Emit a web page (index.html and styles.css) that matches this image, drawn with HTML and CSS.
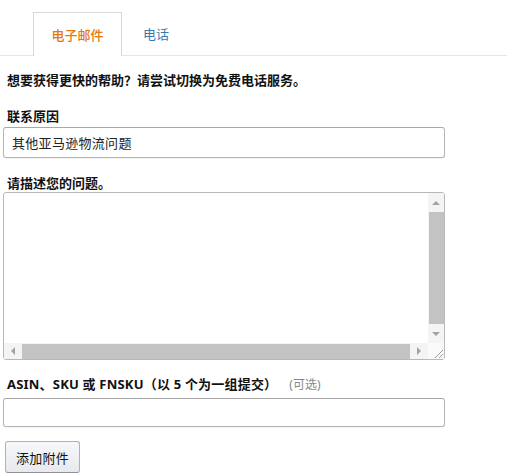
FILE: index.html
```html
<!DOCTYPE html>
<html lang="zh-CN">
<head>
    <meta charset="UTF-8">
    <title>联系我们</title>
    <link rel="stylesheet" href="styles.css">
</head>
<body>
    <div class="tabs">
        <div class="tab active">电子邮件</div>
        <div class="tab">电话</div>
    </div>
    <div class="form">
        <h4 class="hint">想要获得更快的帮助？请尝试切换为免费电话服务。</h4>

        <label class="label reason">联系原因</label>
        <div class="input select">其他亚马逊物流问题</div>

        <label class="label describe">请描述您的问题。</label>
        <div class="textarea">
            <div class="text-body"></div>
            <div class="vbar">
                <span class="arrow up"></span>
                <span class="thumb"></span>
                <span class="arrow down"></span>
            </div>
            <div class="hbar">
                <span class="arrow left"></span>
                <span class="thumb"></span>
                <span class="arrow right"></span>
            </div>
            <div class="corner">
                <svg width="12" height="12" viewBox="0 0 12 12">
                    <path d="M11 3 L3 11 M11 7 L7 11" stroke="#9a9a9a" stroke-width="1" fill="none"/>
                </svg>
            </div>
        </div>

        <label class="label asin">ASIN、SKU 或 FNSKU（以 5 个为一组提交）<span class="optional">(可选)</span></label>
        <div class="input empty"></div>

        <button class="btn">添加附件</button>
    </div>
</body>
</html>
```

FILE: styles.css
```css
body {
    margin: 0;
    background: #fff;
    color: #111;
    font-family: "Noto Sans", "Noto Sans CJK SC", sans-serif;
    font-size: 13px;
}
.tabs {
    display: flex;
    height: 43px;
    padding: 12px 0 0 33px;
    border-bottom: 1px solid #e6e6e6;
}
.tab {
    display: flex;
    align-items: center;
    justify-content: center;
    width: 68px;
    color: #3a78ad;
    font-size: 13px;
}
.tab.active {
    box-sizing: border-box;
    width: 89px;
    height: 44px;
    margin-bottom: -1px;
    border: 1px solid #d8d8d8;
    border-bottom: none;
    background: #fff;
    color: #e47911;
    font-weight: 500;
}
.form {
    display: flex;
    flex-direction: column;
    align-items: flex-start;
    padding: 0 0 0 3px;
    width: 442px;
}
.hint {
    margin: 14px 0 0 4px;
    font-size: 13px;
    line-height: 20px;
    font-weight: bold;
}
.label {
    display: block;
    margin: 17px 0 0 4px;
    font-size: 13px;
    line-height: 18px;
    font-weight: bold;
}
.label.describe {
    margin-top: 16px;
}
.label.asin {
    margin-top: 15px;
    letter-spacing: 0.2px;
}
.optional {
    margin-left: 12px;
    font-size: 12px;
    font-weight: normal;
    letter-spacing: 0;
    color: #888;
}
.input {
    box-sizing: border-box;
    width: 442px;
    height: 31px;
    margin-top: 2px;
    padding: 0 8px;
    border: 1px solid #b4b4b4;
    border-top-color: #a8a8a8;
    border-radius: 3px;
    box-shadow: 0 1px 0 rgba(0, 0, 0, 0.04);
    display: flex;
    align-items: center;
    font-size: 13px;
    letter-spacing: 0.3px;
    color: #222;
}
.input.empty {
    height: 29px;
    margin-top: 4px;
}
.textarea {
    box-sizing: border-box;
    width: 442px;
    height: 168px;
    border: 1px solid #b8b8b8;
    border-radius: 3px;
    display: grid;
    grid-template-columns: 1fr 16px;
    grid-template-rows: 1fr 16px;
    background: #fff;
}
.vbar {
    display: flex;
    flex-direction: column;
    align-items: center;
    background: #f4f4f4;
}
.vbar .thumb {
    width: 15px;
    flex: 1;
    background: #c3c3c3;
}
.vbar .arrow {
    height: 19px;
    width: 16px;
    display: flex;
    align-items: center;
    justify-content: center;
}
.hbar {
    display: flex;
    align-items: center;
    background: #f4f4f4;
}
.hbar .thumb {
    height: 15px;
    flex: 1;
    background: #c3c3c3;
}
.hbar .arrow {
    width: 18px;
    height: 16px;
    display: flex;
    align-items: center;
    justify-content: center;
}
.arrow::before {
    content: "";
    border: 4px solid transparent;
}
.arrow.up::before {
    border-bottom-color: #a3a3a3;
    border-top: none;
}
.arrow.down::before {
    border-top-color: #a3a3a3;
    border-bottom: none;
}
.arrow.left::before {
    border-right-color: #a3a3a3;
    border-left: none;
}
.arrow.right::before {
    border-left-color: #a3a3a3;
    border-right: none;
}
.corner {
    display: flex;
    align-items: flex-end;
    justify-content: flex-end;
    background: #fafafa;
}
.btn {
    margin: 14px 0 0 2px;
    height: 32px;
    width: 75px;
    padding: 0;
    border: 1px solid #adb1b8;
    border-bottom-color: #8d9096;
    border-radius: 3px;
    background: linear-gradient(#f7f8fa, #e7e9ec);
    font-family: "Noto Sans CJK SC", sans-serif;
    font-size: 13px;
    letter-spacing: 0.3px;
    color: #111;
}
```
